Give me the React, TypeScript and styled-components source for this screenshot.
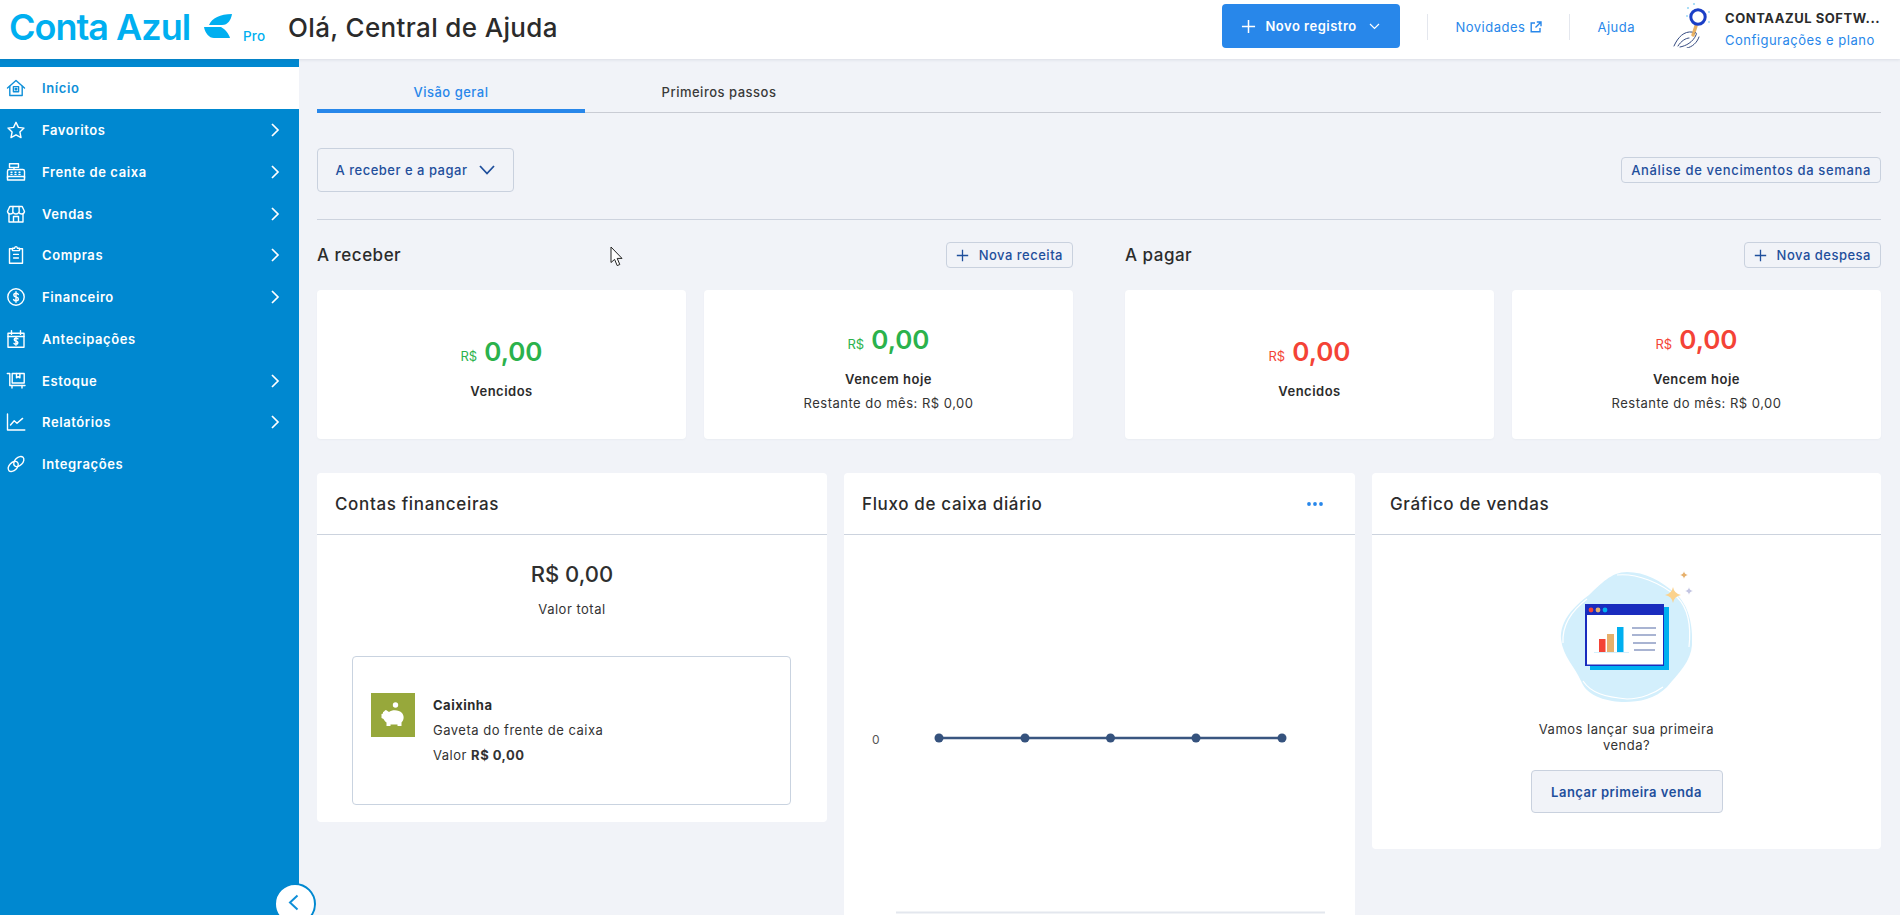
import React from "react";
import styled, { createGlobalStyle } from "styled-components";

const Global = createGlobalStyle`
  html, body { margin: 0; padding: 0; height: 100%; overflow: hidden; background: #f1f3f8; }
  body { font-family: Inter, "Noto Sans", "Liberation Sans", sans-serif; color: #2d2d2d; letter-spacing: 0.5px; }
  #root { height: 100%; }
  * { box-sizing: border-box; }
  button { letter-spacing: inherit; }
`;

const Page = styled.div`
  position: relative;
  width: 1900px;
  height: 915px;
  overflow: hidden;
  display: flex;
  flex-direction: column;
`;

const Header = styled.header`
  height: 59px;
  flex: none;
  background: #fff;
  display: flex;
  align-items: center;
  padding: 0 19px 0 9px;
  box-shadow: 0 1px 3px rgba(60, 70, 100, 0.12);
  position: relative;
  z-index: 2;
`;
const LogoWord = styled.span`
  font-size: 36px;
  font-weight: 600;
  letter-spacing: -1px;
  color: #00aff0;
  line-height: 1;
  margin-top: -6px;
  width: 195px;
  white-space: nowrap;
`;
const LogoLeaf = styled.svg`
  width: 28px;
  height: 24px;
  flex: none;
  margin-top: -7px;
`;
const LogoPro = styled.span`
  font-size: 13.5px;
  font-weight: 500;
  letter-spacing: 0.2px;
  color: #00aff0;
  margin: 12px 0 0 11px;
  width: 45px;
`;
const Title = styled.h1`
  margin: -4px 0 0;
  font-size: 26px;
  font-weight: 500;
  letter-spacing: 0.35px;
  color: #2b2b2b;
  white-space: nowrap;
`;
const HeaderRight = styled.div`
  margin-left: auto;
  margin-top: -5px;
  display: flex;
  align-items: center;
`;
const NewButton = styled.button`
  width: 178px;
  height: 44px;
  margin-top: -2px;
  border: 0;
  border-radius: 4px;
  background: #2887ea;
  color: #fff;
  font: 600 13px Inter, sans-serif;
  display: flex;
  align-items: center;
  padding: 0 0 0 19px;
  gap: 9px;
`;
const NewChevron = styled.svg`
  width: 11px;
  height: 7px;
  margin-left: 3px;
`;
const HeaderSep = styled.span`
  width: 1px;
  height: 26px;
  background: #e4e7ee;
  margin: 0 27px;
`;
const HeaderLink = styled.a`
  font-size: 13px;
  color: #2887ea;
  display: flex;
  align-items: center;
  gap: 5px;
  white-space: nowrap;
`;
const Avatar = styled.svg`
  width: 40px;
  height: 46px;
  margin: -4px 13px 0 37px;
  flex: none;
`;
const UserBlock = styled.div`
  width: 156px;
  margin-top: 4px;
  display: flex;
  flex-direction: column;
  gap: 6px;
`;
const UserName = styled.div`
  font-size: 13px;
  font-weight: 700;
  letter-spacing: 0.55px;
  color: #2b2b2b;
  white-space: nowrap;
`;
const UserLink = styled.div`
  font-size: 13px;
  color: #2887ea;
  white-space: nowrap;
`;

const Body = styled.div`
  flex: 1;
  display: flex;
  min-height: 0;
`;
const Sidebar = styled.nav`
  width: 299px;
  flex: none;
  background: #0088d0;
  padding-top: 8.4px;
`;
const NavRow = styled.div<{ $active?: boolean }>`
  height: 41.75px;
  display: flex;
  align-items: center;
  padding: 0 15px 0 6px;
  gap: 16px;
  background: ${(p) => (p.$active ? "#fff" : "transparent")};
  color: ${(p) => (p.$active ? "#0f8fd8" : "#fff")};
  font-size: 13px;
  font-weight: 600;
  letter-spacing: 0.6px;
`;
const NavIcon = styled.svg`
  width: 20px;
  height: 20px;
  flex: none;
  fill: none;
  stroke: currentColor;
  stroke-width: 1.4;
  stroke-linejoin: round;
  stroke-linecap: round;
`;
const NavChevron = styled.svg`
  width: 10px;
  height: 16px;
  margin-left: auto;
  margin-right: 4px;
  fill: none;
  stroke: #fff;
  stroke-width: 1.7;
`;
const Collapse = styled.button`
  position: absolute;
  left: 274px;
  top: 883px;
  width: 42px;
  height: 42px;
  border-radius: 50%;
  border: 2px solid #0088d0;
  background: #fff;
  padding: 0;
  display: flex;
  align-items: center;
  justify-content: center;
  z-index: 3;
`;
const CollapseChevron = styled.svg`
  width: 11px;
  height: 17px;
  margin: -3px 4px 0 0;
`;
const Cursor = styled.svg`
  position: absolute;
  left: 610px;
  top: 246px;
  width: 14px;
  height: 21px;
  z-index: 4;
`;

const Main = styled.main`
  flex: 1;
  padding: 0 19px 0 18px;
  min-width: 0;
`;
const Tabs = styled.div`
  height: 54px;
  display: flex;
  border-bottom: 1px solid #c9ccd4;
`;
const Tab = styled.div<{ $active?: boolean }>`
  width: 268px;
  height: 54px;
  padding-top: 23px;
  text-align: center;
  font-size: 13px;
  line-height: 20px;
  font-weight: 500;
  color: ${(p) => (p.$active ? "#2887ea" : "#3a3a3a")};
  border-bottom: ${(p) => (p.$active ? "4px solid #2887ea" : "0")};
`;
const Toolbar = styled.div`
  height: 107px;
  padding-top: 35px;
  display: flex;
  align-items: flex-start;
  justify-content: space-between;
  border-bottom: 1px solid #cdd3de;
`;
const SelectButton = styled.button`
  width: 197px;
  height: 44px;
  border: 1px solid #c9d1de;
  border-radius: 4px;
  background: #f1f3f8;
  color: #1f4f9c;
  font: 500 13px Inter, sans-serif;
  display: flex;
  align-items: center;
  justify-content: center;
  gap: 12px;
`;
const GhostButton = styled.button`
  height: 26px;
  border: 1px solid #c9d1de;
  border-radius: 4px;
  background: #f1f3f8;
  color: #1f4f9c;
  font: 500 13px Inter, sans-serif;
  display: flex;
  align-items: center;
  gap: 10px;
  padding: 0 9px;
  white-space: nowrap;
`;
const TopGhost = styled(GhostButton)`
  margin-top: 9px;
  letter-spacing: 0.65px;
`;
const Split = styled.div`
  display: grid;
  grid-template-columns: 756px 756px;
  column-gap: 52px;
  padding-top: 22px;
`;
const SectionHead = styled.div`
  height: 26px;
  display: flex;
  align-items: center;
  justify-content: space-between;
  margin-bottom: 22px;
`;
const SectionTitle = styled.h2`
  margin: 0;
  font-size: 17px;
  font-weight: 500;
  color: #2b2b2b;
`;
const StatRow = styled.div`
  display: grid;
  grid-template-columns: 369px 369px;
  column-gap: 18px;
`;
const StatCard = styled.div`
  height: 149px;
  padding-top: 9px;
  background: #fff;
  border-radius: 4px;
  display: flex;
  flex-direction: column;
  align-items: center;
  justify-content: center;
  box-shadow: 0 1px 2px rgba(60, 70, 100, 0.04);
`;
const StatValue = styled.div<{ $tone: string }>`
  height: 30px;
  line-height: 30px;
  margin-bottom: 14px;
  display: flex;
  align-items: baseline;
  gap: 7px;
  letter-spacing: 0;
  color: ${(p) => p.$tone};
`;
const StatCurrency = styled.span`
  font-size: 13px;
  font-weight: 400;
`;
const StatAmount = styled.span`
  font-size: 26px;
  font-weight: 600;
`;
const StatLabel = styled.div`
  font-size: 13px;
  font-weight: 600;
  line-height: 20px;
  color: #2b2b2b;
`;
const StatNote = styled.div`
  font-size: 13px;
  line-height: 20px;
  margin-top: 4px;
  color: #333;
`;

const Panels = styled.div`
  display: grid;
  grid-template-columns: 510px 511px 509px;
  column-gap: 17px;
  align-items: start;
  padding-top: 34px;
`;
const Panel = styled.section`
  background: #fff;
  border-radius: 4px;
`;
const PanelHead = styled.div`
  height: 62px;
  display: flex;
  align-items: center;
  justify-content: space-between;
  padding: 0 32px 0 18px;
  border-bottom: 1px solid #ccd3de;
`;
const PanelTitle = styled.h3`
  margin: 0;
  font-size: 17px;
  font-weight: 500;
  letter-spacing: 0.65px;
  color: #2b2b2b;
`;
const TotalBlock = styled.div`
  padding-top: 25px;
  text-align: center;
`;
const TotalValue = styled.div`
  font-size: 22px;
  line-height: 28px;
  font-weight: 500;
  letter-spacing: 0;
  color: #2f2f2f;
`;
const TotalLabel = styled.div`
  margin-top: 11px;
  font-size: 13px;
  line-height: 20px;
  color: #333;
`;
const AccountBox = styled.div`
  margin: 37px 36px 17px 35px;
  height: 149px;
  border: 1px solid #c9d3e0;
  border-radius: 4px;
  padding-left: 18px;
  display: flex;
  align-items: center;
  gap: 18px;
`;
const AccountRow = styled.div`
  display: flex;
  align-items: flex-start;
  gap: 18px;
`;
const AccountIcon = styled.div`
  width: 44px;
  height: 44px;
  background: #97a83b;
  display: flex;
  align-items: center;
  justify-content: center;
`;
const AccountText = styled.div`
  font-size: 13px;
  line-height: 25px;
  color: #333;
`;
const AccountName = styled.div`
  font-weight: 700;
  color: #2b2b2b;
`;
const ChartSvg = styled.svg`
  display: block;
  width: 510px;
  height: 400px;
`;
const SalesBody = styled.div`
  padding: 34px 0 36px;
  display: flex;
  flex-direction: column;
  align-items: center;
`;
const Illustration = styled.svg`
  width: 140px;
  height: 136px;
`;
const SalesText = styled.p`
  width: 190px;
  margin: 16px 0 17px;
  text-align: center;
  font-size: 13px;
  line-height: 16px;
  color: #333;
`;
const SalesButton = styled.button`
  width: 192px;
  height: 43px;
  border: 1px solid #c9d1de;
  border-radius: 4px;
  background: #f1f3f8;
  color: #1f4f9c;
  font: 600 13px Inter, sans-serif;
`;

const icons: Record<string, React.ReactNode> = {
  home: (
    <>
      <path d="M1.5 10 10 2.5 18.5 10" />
      <path d="M3.8 8.5V17.5H16.2V8.5" />
      <rect x="7.4" y="8.6" width="5.2" height="5.2" />
      <rect x="9.3" y="10.5" width="1.4" height="1.4" />
    </>
  ),
  star: <path d="M10 2.3 12.4 7.4 18 8.1 13.9 12 15 17.6 10 14.8 5 17.6 6.1 12 2 8.1 7.6 7.4Z" />,
  register: (
    <>
      <rect x="3.5" y="1.8" width="9" height="3.6" />
      <path d="M8 5.4V7.5M1.5 16V9.2Q1.5 7.5 3.2 7.5H16.8Q18.5 7.5 18.5 9.2V16" />
      <rect x="1.5" y="14.5" width="17" height="3.5" />
      <path d="M5 10.2H6M9 10.2H10M13 10.2H14M5 12.4H6M9 12.4H10M13 12.4H14" />
    </>
  ),
  store: (
    <>
      <path d="M3.8 2.5H16.2L18.5 7.5Q18 10 15.8 10 13.6 10 12.9 8.2 12 10 10 10 8 10 7.1 8.2 6.4 10 4.2 10 2 10 1.5 7.5Z" />
      <path d="M3 10V18H17V10M7.5 18V12.5H12.5V18" />
      <path d="M7 2.5 6.8 7.5M13 2.5 13.2 7.5" />
    </>
  ),
  clip: (
    <>
      <path d="M6.5 3.8H3.5V18.2H16.5V3.8H13.5" />
      <path d="M6.5 5.6V3.2H8.6Q8.9 1.6 10 1.6 11.1 1.6 11.4 3.2H13.5V5.6Z" />
      <path d="M7.6 9.4H12.4M7.6 13H12.4" />
    </>
  ),
  money: (
    <>
      <circle cx="10" cy="10" r="8.2" />
      <path d="M12.3 7.4Q11.6 6.2 10 6.2 7.8 6.2 7.8 8 7.8 9.5 10 10 12.4 10.5 12.4 12 12.4 13.8 10 13.8 8.2 13.8 7.6 12.6M10 4.8V15.2" />
    </>
  ),
  calendar: (
    <>
      <path d="M2 4.2H18V18.2H2Z" />
      <path d="M5.5 1.6V5.4M14.5 1.6V5.4M2 7.5H18" />
      <path d="M12 9.8Q11.5 9.1 10 9.1 8.2 9.1 8.2 10.6 8.2 11.8 10 12.2 11.9 12.6 11.9 13.8 11.9 15.3 10 15.3 8.6 15.3 8 14.4M10 8.2V16.2" />
    </>
  ),
  stock: (
    <>
      <path d="M1.3 2.5H3.8V14.5H19" />
      <rect x="6.2" y="2.5" width="12" height="9.5" />
      <path d="M10.5 2.5V6.8L12.2 5.7 13.9 6.8V2.5" />
      <path d="M6 14.5V17M16 14.5V17" />
    </>
  ),
  report: (
    <>
      <path d="M1.5 2V18H18.8" />
      <path d="M4.5 13 8.2 8.8 11 11.2 16.6 6.4" />
    </>
  ),
  link: (
    <>
      <ellipse cx="7.2" cy="12.4" rx="6" ry="3.9" transform="rotate(-45 7.2 12.4)" />
      <ellipse cx="12.8" cy="7.6" rx="6" ry="3.9" transform="rotate(-45 12.8 7.6)" />
    </>
  ),
};

const navItems = [
  { label: "Início", icon: "home", active: true },
  { label: "Favoritos", icon: "star", more: true },
  { label: "Frente de caixa", icon: "register", more: true },
  { label: "Vendas", icon: "store", more: true },
  { label: "Compras", icon: "clip", more: true },
  { label: "Financeiro", icon: "money", more: true },
  { label: "Antecipações", icon: "calendar" },
  { label: "Estoque", icon: "stock", more: true },
  { label: "Relatórios", icon: "report", more: true },
  { label: "Integrações", icon: "link" },
];

const Plus = ({ size, color, width = 1.6 }: { size: number; color: string; width?: number }) => (
  <svg width={size} height={size} viewBox="0 0 16 16" fill="none" stroke={color} strokeWidth={width}>
    <path d="M8 1V15M1 8H15" />
  </svg>
);

const Stat = ({ tone, label, note }: { tone: string; label: string; note?: string }) => (
  <StatCard>
    <StatValue $tone={tone}>
      <StatCurrency>R$</StatCurrency>
      <StatAmount>0,00</StatAmount>
    </StatValue>
    <StatLabel>{label}</StatLabel>
    {note && <StatNote>{note}</StatNote>}
  </StatCard>
);

const Sparkle = ({ x, y, r, fill }: { x: number; y: number; r: number; fill: string }) => (
  <path
    fill={fill}
    d={`M${x} ${y - r}Q${x + r * 0.15} ${y - r * 0.15} ${x + r} ${y}Q${x + r * 0.15} ${y + r * 0.15} ${x} ${y + r}Q${x - r * 0.15} ${y + r * 0.15} ${x - r} ${y}Q${x - r * 0.15} ${y - r * 0.15} ${x} ${y - r}Z`}
  />
);

export default function App() {
  return (
    <Page>
      <Global />
      <Header>
        <LogoWord>Conta Azul</LogoWord>
        <LogoLeaf viewBox="0 0 28 24">
          <path fill="#00aff0" d="M5 11C8 4 16 0 28 0 27 6 24 11 18 11Z" />
          <path fill="#00aff0" d="M0 13H17C21 15 25 20 26 24H10C5 24 1 19 0 13Z" />
        </LogoLeaf>
        <LogoPro>Pro</LogoPro>
        <Title>Olá, Central de Ajuda</Title>
        <HeaderRight>
          <NewButton>
            <Plus size={15} color="#fff" />
            Novo registro
            <NewChevron viewBox="0 0 11 7" fill="none" stroke="#fff" strokeWidth="1.2">
              <path d="M1 1 5.5 5.5 10 1" />
            </NewChevron>
          </NewButton>
          <HeaderSep />
          <HeaderLink>
            Novidades
            <svg width="12" height="12" viewBox="0 0 12 12" fill="none" stroke="#2887ea" strokeWidth="1.4">
              <path d="M5 2H1.2V10.8H10V7M6.8 1H11V5.2M11 1 5.5 6.5" />
            </svg>
          </HeaderLink>
          <HeaderSep />
          <HeaderLink>Ajuda</HeaderLink>
          <Avatar viewBox="0 0 40 46">
            <path d="M24 24 21 33" stroke="#e9b264" strokeWidth="3.4" strokeLinecap="round" />
            <circle cx="26" cy="15" r="7.2" fill="#fff" stroke="#1b3fc6" strokeWidth="3" />
            <g fill="#8fd3f4">
              <circle cx="16" cy="6" r="1" />
              <circle cx="22" cy="2" r="1" />
              <circle cx="15" cy="14" r="0.9" />
              <circle cx="37" cy="10" r="0.9" />
              <circle cx="37" cy="20" r="0.9" />
            </g>
            <g fill="none" stroke="#33497f" strokeWidth="1" strokeLinecap="round">
              <path d="M2 44C6 35 12 29 20 30" />
              <path d="M6 44C9 39 14 36 17 36" />
              <path d="M8 45C14 44 21 40 24 33 25 31 24 30 23 31" />
              <path d="M15 46C20 45 25 41 27 35" />
            </g>
          </Avatar>
          <UserBlock>
            <UserName>CONTAAZUL SOFTW...</UserName>
            <UserLink>Configurações e plano</UserLink>
          </UserBlock>
        </HeaderRight>
      </Header>
      <Body>
        <Sidebar>
          {navItems.map((item) => (
            <NavRow key={item.label} $active={item.active}>
              <NavIcon viewBox="0 0 20 20">{icons[item.icon]}</NavIcon>
              {item.label}
              {item.more && (
                <NavChevron viewBox="0 0 10 16">
                  <path d="M2 2 8 8 2 14" />
                </NavChevron>
              )}
            </NavRow>
          ))}
        </Sidebar>
        <Main>
          <Tabs>
            <Tab $active>Visão geral</Tab>
            <Tab>Primeiros passos</Tab>
          </Tabs>
          <Toolbar>
            <SelectButton>
              A receber e a pagar
              <svg width="16" height="10" viewBox="0 0 16 10" fill="none" stroke="#1f4f9c" strokeWidth="1.8">
                <path d="M1 1 8 8.5 15 1" />
              </svg>
            </SelectButton>
            <TopGhost>Análise de vencimentos da semana</TopGhost>
          </Toolbar>
          <Split>
            <div>
              <SectionHead>
                <SectionTitle>A receber</SectionTitle>
                <GhostButton>
                  <Plus size={13} color="#1f4f9c" />
                  Nova receita
                </GhostButton>
              </SectionHead>
              <StatRow>
                <Stat tone="#2bb24c" label="Vencidos" />
                <Stat tone="#2bb24c" label="Vencem hoje" note="Restante do mês: R$ 0,00" />
              </StatRow>
            </div>
            <div>
              <SectionHead>
                <SectionTitle>A pagar</SectionTitle>
                <GhostButton>
                  <Plus size={13} color="#1f4f9c" />
                  Nova despesa
                </GhostButton>
              </SectionHead>
              <StatRow>
                <Stat tone="#f44336" label="Vencidos" />
                <Stat tone="#f44336" label="Vencem hoje" note="Restante do mês: R$ 0,00" />
              </StatRow>
            </div>
          </Split>
          <Panels>
            <Panel>
              <PanelHead>
                <PanelTitle>Contas financeiras</PanelTitle>
              </PanelHead>
              <TotalBlock>
                <TotalValue>R$ 0,00</TotalValue>
                <TotalLabel>Valor total</TotalLabel>
              </TotalBlock>
              <AccountBox>
                <AccountRow>
                  <AccountIcon>
                    <svg width="24" height="26" viewBox="0 0 24 26" fill="#fff">
                      <circle cx="14.5" cy="3" r="2.7" />
                      <path d="M2 10C3 10 4 8 5 8L8 10C11 7.5 18 7.5 21 11 23.5 14 23 18 20.5 20.5V24H16.5V22.5H9.5V24H5.5V20.5C4 19.5 3 18 2.5 17L0.5 16V12L2 11.5Z" />
                    </svg>
                  </AccountIcon>
                  <AccountText>
                    <AccountName>Caixinha</AccountName>
                    <div>Gaveta do frente de caixa</div>
                    <div>
                      Valor <b>R$ 0,00</b>
                    </div>
                  </AccountText>
                </AccountRow>
              </AccountBox>
            </Panel>
            <Panel>
              <PanelHead>
                <PanelTitle>Fluxo de caixa diário</PanelTitle>
                <svg width="16" height="4" viewBox="0 0 16 4" fill="#2887ea">
                  <circle cx="2" cy="2" r="1.9" />
                  <circle cx="8" cy="2" r="1.9" />
                  <circle cx="14" cy="2" r="1.9" />
                </svg>
              </PanelHead>
              <ChartSvg viewBox="0 0 510 400">
                <text x="32" y="209" textAnchor="middle" fontSize="12" fontFamily="Inter, sans-serif" fill="#555">
                  0
                </text>
                <path d="M95 203H438" stroke="#3a5680" strokeWidth="2.5" />
                {[95, 181, 266.5, 352, 438].map((x) => (
                  <circle key={x} cx={x} cy="203" r="4.5" fill="#35527d" />
                ))}
                <rect x="52" y="376.5" width="429" height="2" fill="#e3e7ee" />
              </ChartSvg>
            </Panel>
            <Panel>
              <PanelHead>
                <PanelTitle>Gráfico de vendas</PanelTitle>
              </PanelHead>
              <SalesBody>
                <Illustration viewBox="0 0 140 136">
                  <path
                    fill="#d3effc"
                    d="M70 3C88 3 104 12 118 24 132 36 136 56 135 76 134 92 122 104 110 118 98 130 82 133 68 133 52 133 30 128 24 112 18 98 6 88 4 70 3 52 16 38 32 26 44 15 54 3 70 3Z"
                  />
                  <path
                    fill="none"
                    stroke="#fff"
                    strokeWidth="1.2"
                    d="M60 6C80 4 104 14 120 28 132 40 134 60 132 78M26 112C34 124 48 128 70 130 84 130 98 124 106 118M6 74C5 56 14 42 30 30"
                  />
                  <rect x="33" y="38" width="79" height="63" fill="#00aff0" />
                  <rect x="28" y="35" width="79" height="62" fill="#1a2cbe" />
                  <rect x="30" y="46" width="76" height="49.5" fill="#fff" />
                  <circle cx="34" cy="41" r="2.4" fill="#f44336" />
                  <circle cx="41" cy="41" r="2.4" fill="#e6b06c" />
                  <circle cx="48" cy="41" r="2.4" fill="#00aff0" />
                  <rect x="42" y="70" width="6.5" height="13" fill="#f44336" />
                  <rect x="50" y="65" width="7" height="18" fill="#e6b06c" />
                  <rect x="60" y="58" width="6.5" height="25" fill="#00aff0" />
                  <path d="M37 83.5H72" stroke="#d3effc" strokeWidth="1" />
                  <path d="M75 59H99M75 66H99M76 74H99M77 81H98" stroke="#a9b4d2" strokeWidth="2" />
                  <Sparkle x={116} y={26} r={8} fill="#fbd28c" />
                  <Sparkle x={127} y={6} r={3.8} fill="#e6b06c" />
                  <Sparkle x={132} y={22} r={3.8} fill="#c3c5e2" />
                </Illustration>
                <SalesText>Vamos lançar sua primeira venda?</SalesText>
                <SalesButton>Lançar primeira venda</SalesButton>
              </SalesBody>
            </Panel>
          </Panels>
        </Main>
      </Body>
      <Collapse>
        <CollapseChevron viewBox="0 0 11 17" fill="none" stroke="#0f8fd8" strokeWidth="2">
          <path d="M9.5 1.5 2 8.5 9.5 15.5" />
        </CollapseChevron>
      </Collapse>
      <Cursor viewBox="0 0 14 21">
        <path d="M1 1V16.5L4.6 13.4 7.2 19.6 9.8 18.5 7.2 12.4H12Z" fill="#fff" stroke="#222" strokeWidth="1" />
      </Cursor>
    </Page>
  );
}
